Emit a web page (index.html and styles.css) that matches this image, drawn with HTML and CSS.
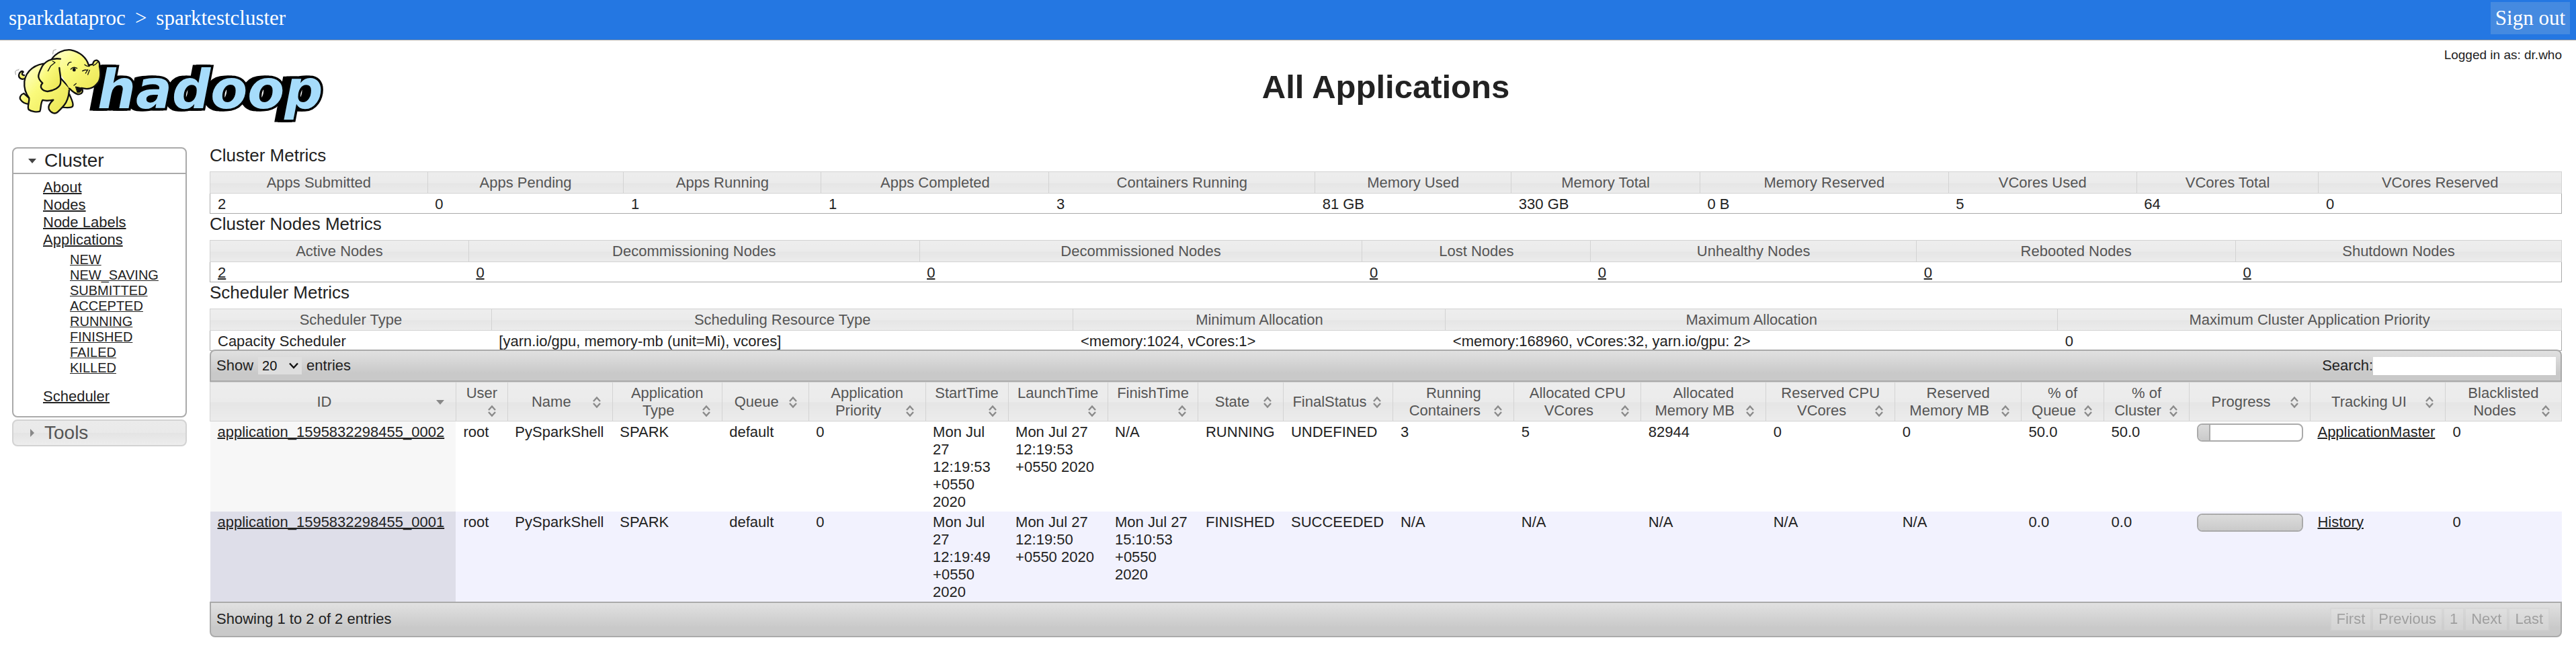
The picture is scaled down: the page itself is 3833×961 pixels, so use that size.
FILE: index.html
```html
<!DOCTYPE html>
<html lang="en">
<head>
<meta charset="utf-8">
<title>All Applications</title>
<link rel="stylesheet" href="styles.css">
</head>
<body>
<svg class="defs" aria-hidden="true">
  <symbol id="sort-both" viewBox="0 0 26 26">
    <path d="M8 12L13 6.500L18 12M8 15L13 20.500L18 15" fill="none" stroke="#8a8a8a" stroke-width="2.400"/>
  </symbol>
  <symbol id="sort-down" viewBox="0 0 26 26">
    <path d="M7 10H19L13 17Z" fill="#888"/>
  </symbol>
</svg>

<nav class="topbar">
  <div class="crumbs">
    <a href="#">sparkdataproc</a>
    <span>&gt;</span>
    <a href="#">sparktestcluster</a>
  </div>
  <a class="signout" href="#">Sign out</a>
</nav>

<header class="masthead">
  <a class="logo" href="#" aria-label="hadoop">
    <svg width="470" height="124" viewBox="16 65 470 124">
      <defs>
        <linearGradient id="skin" x1="0" y1="0" x2="1" y2="1">
          <stop offset="0" stop-color="#ffffd8"/>
          <stop offset=".4" stop-color="#fafa7c"/>
          <stop offset="1" stop-color="#e9e34e"/>
        </linearGradient>
      </defs>
      <text class="wordmark" x="145" y="161">hadoop</text>
      <g transform="translate(10 55) scale(.3333)" fill="url(#skin)" stroke="#111" stroke-width="7" stroke-linejoin="round" stroke-linecap="round">
        <path d="M80 186C66 192 53 184 54 170C56 156 68 149 74 156C66 162 66 170 78 171"/>
        <path d="M76 252C60 258 56 272 62 280C70 292 82 298 100 300L108 280Z"/>
        <path d="M268 262L280 256C286 272 300 296 295 308C292 318 268 316 250 314Z"/>
        <path d="M180 118C130 118 86 150 79 198C76 232 86 254 100 272C102 292 90 312 98 324C110 334 136 336 148 332C154 318 150 298 160 282C176 286 194 284 208 281C196 292 182 306 188 322C196 338 214 346 226 336C256 308 280 286 279 226Z"/>
        <path d="M190 180L200 230L282 236Z" stroke="none"/>
        <path d="M200 100C220 70 254 55 286 58C326 66 356 92 366 126L384 122C386 110 394 102 402 104C412 108 416 118 414 130C422 170 418 196 402 210C384 232 356 234 334 228C346 244 334 256 318 256C302 252 290 240 280 230"/>
        <path d="M308 222L336 228C336 242 328 250 316 248Z" fill="#111" stroke-width="3"/>
        <path d="M240 98C202 92 166 108 152 144C140 170 134 182 160 206C144 222 156 240 182 243C210 240 236 226 240 208C244 180 236 160 235 138"/>
        <g fill="none" stroke-width="4">
          <path d="M205 108L216 114L196 130L184 152M272 126C274 116 280 112 288 112M286 144C294 134 304 134 314 140M300 216L310 208M348 124C354 130 362 132 370 130M338 152C344 148 352 146 358 148M352 162L362 146M362 168L370 148M386 128C394 124 402 118 406 112"/>
          <path d="M206 76L208 60L220 56M40 168L38 154L48 146M50 150L54 144" stroke="#999" stroke-width="3"/>
        </g>
        <ellipse cx="301" cy="146" rx="7" ry="8" fill="#111" stroke="none"/>
      </g>
    </svg>
  </a>
  <h1>All Applications</h1>
  <p class="login">Logged in as: dr.who</p>
</header>

<div class="layout">
  <aside class="sidebar">
    <section class="panel open">
      <h2><button type="button" aria-expanded="true"><svg width="12" height="12" viewBox="0 0 12 12"><path d="M0 3H12L6 10Z" fill="#444"/></svg>Cluster</button></h2>
      <ul class="menu">
        <li><a href="#">About</a></li>
        <li><a href="#">Nodes</a></li>
        <li><a href="#">Node Labels</a></li>
        <li><a href="#">Applications</a>
          <ul class="submenu">
            <li><a href="#">NEW</a></li>
            <li><a href="#">NEW_SAVING</a></li>
            <li><a href="#">SUBMITTED</a></li>
            <li><a href="#">ACCEPTED</a></li>
            <li><a href="#">RUNNING</a></li>
            <li><a href="#">FINISHED</a></li>
            <li><a href="#">FAILED</a></li>
            <li><a href="#">KILLED</a></li>
          </ul>
        </li>
        <li><a href="#">Scheduler</a></li>
      </ul>
    </section>
    <section class="panel closed">
      <h2><button type="button" aria-expanded="false"><svg width="12" height="12" viewBox="0 0 12 12"><path d="M3 0V12L9 6Z" fill="#888"/></svg>Tools</button></h2>
    </section>
  </aside>

  <main class="content">
    <h2>Cluster Metrics</h2>
    <table class="metrics cluster">
      <thead><tr><th>Apps Submitted</th><th>Apps Pending</th><th>Apps Running</th><th>Apps Completed</th><th>Containers Running</th><th>Memory Used</th><th>Memory Total</th><th>Memory Reserved</th><th>VCores Used</th><th>VCores Total</th><th>VCores Reserved</th></tr></thead>
      <tbody><tr><td>2</td><td>0</td><td>1</td><td>1</td><td>3</td><td>81 GB</td><td>330 GB</td><td>0 B</td><td>5</td><td>64</td><td>0</td></tr></tbody>
    </table>

    <h2>Cluster Nodes Metrics</h2>
    <table class="metrics nodes">
      <thead><tr><th>Active Nodes</th><th>Decommissioning Nodes</th><th>Decommissioned Nodes</th><th>Lost Nodes</th><th>Unhealthy Nodes</th><th>Rebooted Nodes</th><th>Shutdown Nodes</th></tr></thead>
      <tbody><tr><td><a href="#">2</a></td><td><a href="#">0</a></td><td><a href="#">0</a></td><td><a href="#">0</a></td><td><a href="#">0</a></td><td><a href="#">0</a></td><td><a href="#">0</a></td></tr></tbody>
    </table>

    <h2>Scheduler Metrics</h2>
    <table class="metrics scheduler">
      <thead><tr><th>Scheduler Type</th><th>Scheduling Resource Type</th><th>Minimum Allocation</th><th>Maximum Allocation</th><th>Maximum Cluster Application Priority</th></tr></thead>
      <tbody><tr><td>Capacity Scheduler</td><td>[yarn.io/gpu, memory-mb (unit=Mi), vcores]</td><td>&lt;memory:1024, vCores:1&gt;</td><td>&lt;memory:168960, vCores:32, yarn.io/gpu: 2&gt;</td><td>0</td></tr></tbody>
    </table>

    <div class="toolbar top">
      <label class="length">Show
        <span class="picker">
          <select><option>10</option><option selected>20</option><option>50</option><option>100</option></select>
          <svg width="14" height="10" viewBox="0 0 14 10"><path d="M1 1.500L7 8L13 1.500" fill="none" stroke="#111" stroke-width="2.400"/></svg>
        </span>
        entries</label>
      <label class="search">Search:<input type="text"></label>
    </div>

    <table class="apps">
      <thead>
        <tr>
          <th aria-sort="descending">ID<svg class="sort"><use href="#sort-down"/></svg></th>
          <th>User<svg class="sort"><use href="#sort-both"/></svg></th>
          <th>Name<svg class="sort"><use href="#sort-both"/></svg></th>
          <th>Application Type<svg class="sort"><use href="#sort-both"/></svg></th>
          <th>Queue<svg class="sort"><use href="#sort-both"/></svg></th>
          <th>Application Priority<svg class="sort"><use href="#sort-both"/></svg></th>
          <th>StartTime<svg class="sort"><use href="#sort-both"/></svg></th>
          <th>LaunchTime<svg class="sort"><use href="#sort-both"/></svg></th>
          <th>FinishTime<svg class="sort"><use href="#sort-both"/></svg></th>
          <th>State<svg class="sort"><use href="#sort-both"/></svg></th>
          <th>FinalStatus<svg class="sort"><use href="#sort-both"/></svg></th>
          <th>Running Containers<svg class="sort"><use href="#sort-both"/></svg></th>
          <th>Allocated CPU VCores<svg class="sort"><use href="#sort-both"/></svg></th>
          <th>Allocated Memory MB<svg class="sort"><use href="#sort-both"/></svg></th>
          <th>Reserved CPU VCores<svg class="sort"><use href="#sort-both"/></svg></th>
          <th>Reserved Memory MB<svg class="sort"><use href="#sort-both"/></svg></th>
          <th>% of Queue<svg class="sort"><use href="#sort-both"/></svg></th>
          <th>% of Cluster<svg class="sort"><use href="#sort-both"/></svg></th>
          <th>Progress<svg class="sort"><use href="#sort-both"/></svg></th>
          <th>Tracking UI<svg class="sort"><use href="#sort-both"/></svg></th>
          <th>Blacklisted Nodes<svg class="sort"><use href="#sort-both"/></svg></th>
        </tr>
      </thead>
      <tbody>
        <tr>
          <td><a href="#">application_1595832298455_0002</a></td><td>root</td><td>PySparkShell</td><td>SPARK</td><td>default</td><td>0</td><td>Mon Jul 27 12:19:53 +0550 2020</td><td>Mon Jul 27 12:19:53 +0550 2020</td><td>N/A</td><td>RUNNING</td><td>UNDEFINED</td><td>3</td><td>5</td><td>82944</td><td>0</td><td>0</td><td>50.0</td><td>50.0</td>
          <td><div class="bar"><div class="fill" style="width:12%"></div></div></td>
          <td><a href="#">ApplicationMaster</a></td><td>0</td>
        </tr>
        <tr>
          <td><a href="#">application_1595832298455_0001</a></td><td>root</td><td>PySparkShell</td><td>SPARK</td><td>default</td><td>0</td><td>Mon Jul 27 12:19:49 +0550 2020</td><td>Mon Jul 27 12:19:50 +0550 2020</td><td>Mon Jul 27 15:10:53 +0550 2020</td><td>FINISHED</td><td>SUCCEEDED</td><td>N/A</td><td>N/A</td><td>N/A</td><td>N/A</td><td>N/A</td><td>0.0</td><td>0.0</td>
          <td><div class="bar"><div class="fill full" style="width:100%"></div></div></td>
          <td><a href="#">History</a></td><td>0</td>
        </tr>
      </tbody>
    </table>

    <div class="toolbar bottom">
      <p>Showing 1 to 2 of 2 entries</p>
      <div class="pager">
        <button type="button" disabled>First</button>
        <button type="button" disabled>Previous</button>
        <button type="button" disabled>1</button>
        <button type="button" disabled>Next</button>
        <button type="button" disabled>Last</button>
      </div>
    </div>
  </main>
</div>
</body>
</html>
```

FILE: styles.css
```css
* {
  box-sizing: border-box;
}

body {
  margin: 0;
  background: #fff;
  color: #222;
  font: 22px/26px "Liberation Sans", Arial, sans-serif;
}

h1, h2, p, ul {
  margin: 0;
  padding: 0;
  font-weight: normal;
}

ul {
  list-style: none;
}

a {
  color: #222;
  text-decoration-thickness: 2px;
}

button, input, select {
  font: inherit;
  margin: 0;
}

.defs {
  display: none;
}

.topbar {
  display: flex;
  justify-content: space-between;
  align-items: flex-start;
  height: 60px;
  padding: 3px 9px 0 13px;
  background: #2477e2;
  border-bottom: 1px solid #9a9a9a;
  color: #fff;
  font: 31px/48px "Liberation Serif", "Times New Roman", serif;
}

.topbar a {
  color: #fff;
  text-decoration: none;
}

.crumbs {
  display: flex;
  gap: 14px;
}

.signout {
  padding: 0 7px;
  background: #458ae0;
}

.masthead {
  display: grid;
  grid-template-columns: 296px minmax(0, 1fr);
  align-items: start;
  height: 156px;
  padding: 5px 21px 0 16px;
}

.logo svg {
  display: block;
}

.wordmark {
  font: italic bold 80px "DejaVu Sans", sans-serif;
  fill: #a6dcfb;
  stroke: #000;
  stroke-width: 7px;
  paint-order: stroke;
  filter: drop-shadow(-5px 0 0 #000) drop-shadow(-5px 0 0 #000);
}

h1, .login {
  grid-area: 1 / 2;
}

h1 {
  margin-top: 36px;
  font-size: 49px;
  line-height: 56px;
  font-weight: bold;
  text-align: center;
}

.login {
  justify-self: end;
  margin-top: 4px;
  font-size: 19px;
}

.layout {
  display: grid;
  grid-template-columns: 260px minmax(0, 1fr);
  gap: 34px;
  padding: 0 21px 14px 18px;
}

.sidebar {
  padding-top: 3px;
}

.panel {
  border: 2px solid #aaa;
  border-radius: 8px;
  overflow: hidden;
}

.panel h2 {
  line-height: 36px;
}

.panel button {
  display: flex;
  align-items: center;
  gap: 12px;
  width: 100%;
  height: 36px;
  padding: 0 0 0 22px;
  border: 0;
  background: none;
  color: #222;
  font-size: 28px;
  text-align: left;
}

.open h2 {
  border-bottom: 2px solid #aaa;
}

.menu {
  padding: 7px 0 16px 44px;
}

.submenu {
  padding: 5px 0 18px 40px;
  font-size: 20px;
  line-height: 23px;
}

.submenu a {
  text-decoration-thickness: 1px;
}

.closed {
  margin-top: 3px;
  border-color: #d3d3d3;
  background: linear-gradient(#ebebeb, #e9e9e9 50%, #e4e4e4 51%, #ededed);
}

.closed button {
  color: #555;
}

.content h2 {
  padding-bottom: 9px;
  font-size: 26px;
  line-height: 30px;
}

table {
  width: 100%;
  table-layout: fixed;
  border-collapse: collapse;
}

th {
  padding: 3px 10px 2px;
  border: 1px solid #d3d3d3;
  background: linear-gradient(#ededed, #ebebeb 50%, #e5e5e5 51%, #ececec);
  color: #555;
  font-weight: normal;
}

td {
  padding: 3px 10px 0 11px;
  text-align: left;
  vertical-align: top;
}

.metrics {
  border: 1px solid #aaa;
}

.cluster th:nth-child(1) { width: 9.250%; }
.cluster th:nth-child(2) { width: 8.340%; }
.cluster th:nth-child(3) { width: 8.400%; }
.cluster th:nth-child(4) { width: 9.690%; }
.cluster th:nth-child(5) { width: 11.310%; }
.cluster th:nth-child(6) { width: 8.350%; }
.cluster th:nth-child(7) { width: 8.020%; }
.cluster th:nth-child(8) { width: 10.570%; }
.cluster th:nth-child(9) { width: 8.000%; }
.cluster th:nth-child(10) { width: 7.740%; }

.nodes th:nth-child(1) { width: 11%; }
.nodes th:nth-child(2) { width: 19.170%; }
.nodes th:nth-child(3) { width: 18.830%; }
.nodes th:nth-child(4) { width: 9.710%; }
.nodes th:nth-child(5) { width: 13.860%; }
.nodes th:nth-child(6) { width: 13.570%; }

.scheduler th:nth-child(1) { width: 11.970%; }
.scheduler th:nth-child(2) { width: 24.740%; }
.scheduler th:nth-child(3) { width: 15.830%; }
.scheduler th:nth-child(4) { width: 26.030%; }

.toolbar {
  display: flex;
  justify-content: space-between;
  align-items: center;
  border: 2px solid #aaa;
  background: linear-gradient(#e1e1e1, #c9c9c9 75%);
}

.top {
  height: 48px;
  margin-top: -2px;
  padding: 0 7px 0 8px;
  border-radius: 8px 8px 0 0;
}

.length, .search {
  display: flex;
  align-items: center;
}

.length {
  gap: 7px;
}

.picker {
  position: relative;
  display: flex;
}

.picker select {
  width: 65px;
  height: 26px;
  padding: 0 6px;
  border: 0;
  border-radius: 0;
  appearance: none;
  background: #dedede;
  color: #111;
  font-size: 20px;
}

.picker svg {
  position: absolute;
  top: 8px;
  right: 5px;
  pointer-events: none;
}

.search input {
  width: 272px;
  height: 27px;
  padding: 0 4px;
  border: 0;
  background: #fff;
}

.apps th:nth-child(1) { width: 10.457%; }
.apps th:nth-child(2) { width: 2.200%; }
.apps th:nth-child(3) { width: 4.457%; }
.apps th:nth-child(4) { width: 4.657%; }
.apps th:nth-child(5) { width: 3.686%; }
.apps th:nth-child(6) { width: 4.971%; }
.apps th:nth-child(7) { width: 3.514%; }
.apps th:nth-child(8) { width: 4.229%; }
.apps th:nth-child(9) { width: 3.857%; }
.apps th:nth-child(10) { width: 3.629%; }
.apps th:nth-child(11) { width: 4.657%; }
.apps th:nth-child(12) { width: 5.143%; }
.apps th:nth-child(13) { width: 5.400%; }
.apps th:nth-child(14) { width: 5.314%; }
.apps th:nth-child(15) { width: 5.486%; }
.apps th:nth-child(16) { width: 5.371%; }
.apps th:nth-child(17) { width: 3.514%; }
.apps th:nth-child(18) { width: 3.629%; }
.apps th:nth-child(19) { width: 5.143%; }
.apps th:nth-child(20) { width: 5.743%; }

.sort {
  float: right;
  width: 26px;
  height: 26px;
}

.apps tbody tr {
  height: 134px;
}

.apps tbody td:first-child {
  background: #f7f7f7;
}

.apps tbody tr:nth-child(2) td {
  background: #f2f2fe;
}

.apps tbody tr:nth-child(2) td:first-child {
  background: #dedee9;
}

.bar {
  height: 27px;
  border: 2px solid #aaa;
  border-radius: 8px;
  background: #fff;
  overflow: hidden;
}

.fill {
  height: 100%;
  border-right: 2px solid #aaa;
  background: linear-gradient(#dcdcdc, #cacaca);
}

.full {
  border-right: 0;
}

.bottom {
  min-height: 53px;
  padding: 0 16px 0 8px;
  border-radius: 0 0 8px 8px;
}

.pager {
  display: flex;
}

.pager button {
  height: 35px;
  padding: 0 8px;
  border: 2px solid #d3d3d3;
  background: #e6e6e6;
  color: #555;
  opacity: .4;
}
```
